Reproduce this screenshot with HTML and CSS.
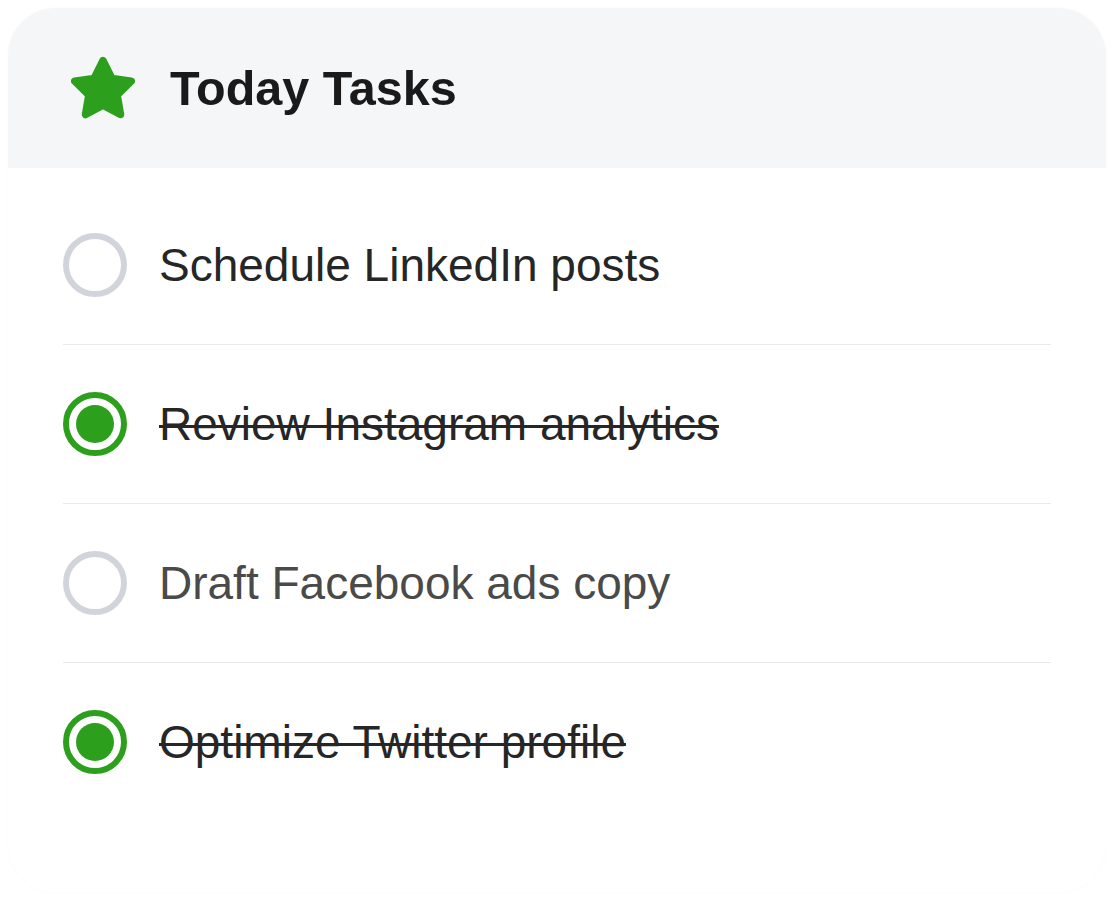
FILE: index.html
```html
<!DOCTYPE html>
<html lang="en">
<head>
<meta charset="utf-8">
<title>Today Tasks</title>
<link rel="stylesheet" href="styles.css">
</head>
<body>
<div class="card">
  <div class="header">
    <svg class="star" viewBox="1 0.8 22 22" aria-hidden="true">
      <path d="M12 2.4l3.05 6.1 6.65 0.95-4.85 4.75 1.15 6.7L12 17.7l-6 3.2 1.15-6.7-4.85-4.75 6.65-0.95z" fill="#2ca01c" stroke="#2ca01c" stroke-width="2.6" stroke-linejoin="round"/>
    </svg>
    <h1 class="title">Today Tasks</h1>
  </div>
  <ul class="list">
    <li class="row">
      <span class="check"></span>
      <span class="label">Schedule LinkedIn posts</span>
    </li>
    <li class="row done">
      <span class="check"></span>
      <span class="label">Review Instagram analytics</span>
    </li>
    <li class="row muted">
      <span class="check"></span>
      <span class="label">Draft Facebook ads copy</span>
    </li>
    <li class="row done">
      <span class="check"></span>
      <span class="label">Optimize Twitter profile</span>
    </li>
  </ul>
</div>
</body>
</html>
```

FILE: styles.css
```css
html, body {
  margin: 0;
  padding: 0;
  background: #ffffff;
}

body {
  padding: 8px;
  font-family: "Liberation Sans", Arial, sans-serif;
}

.card {
  height: 885px;
  box-sizing: border-box;
  border-radius: 48px;
  overflow: hidden;
  background: #ffffff;
  box-shadow: 0 0 2px rgba(0, 0, 0, 0.04);
}

.header {
  height: 160px;
  box-sizing: border-box;
  background: #f5f6f8;
  display: flex;
  align-items: center;
  padding-left: 63px;
  gap: 35px;
}

.star {
  width: 64px;
  height: 64px;
  flex: none;
}

.title {
  margin: 0;
  font-size: 48.5px;
  font-weight: 700;
  color: #1a1a1a;
  line-height: 1;
}

.list {
  list-style: none;
  margin: 0;
  padding: 18px 55px 0;
}

.row {
  display: flex;
  align-items: center;
  gap: 32px;
  padding: 47px 0;
  border-bottom: 1px solid #e9eaec;
}

.row:last-child {
  border-bottom: none;
}

.check {
  width: 64px;
  height: 64px;
  box-sizing: border-box;
  border-radius: 50%;
  border: 6px solid #d1d5db;
  flex: none;
  display: flex;
  align-items: center;
  justify-content: center;
}

.done .check {
  border-color: #2ca01c;
}

.done .check::after {
  content: "";
  width: 38px;
  height: 38px;
  border-radius: 50%;
  background: #2ca01c;
}

.label {
  font-size: 46px;
  line-height: 1;
  color: #262626;
}

.done .label {
  text-decoration: line-through;
  text-decoration-thickness: 3px;
  color: #262626;
}

.muted .label {
  color: #4a4a4a;
}
```
